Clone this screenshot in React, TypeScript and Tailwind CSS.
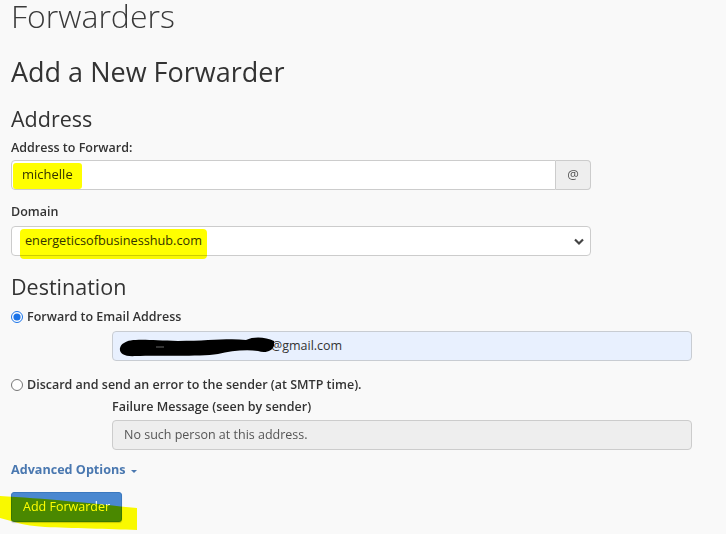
import React from 'react';

const font = { fontFamily: '"Open Sans", "Liberation Sans", sans-serif' };

function Highlight({ className }: { className: string }) {
  return <span className={`pointer-events-none absolute bg-[#ffff00] mix-blend-multiply ${className}`} />;
}

function Radio({ checked }: { checked?: boolean }) {
  return (
    <input
      type="radio"
      name="fwdopt"
      defaultChecked={checked}
      className="m-0 h-[12px] w-[12px] shrink-0 accent-[#1a73e8]"
    />
  );
}

export default function App() {
  return (
    <div style={font} className="relative min-h-[534px] w-[726px] overflow-hidden bg-[#f9f9f9] px-[11px] text-[#333]">
      <h1 className="text-[32px] font-light leading-[32px] text-[#3a3a3a]">Forwarders</h1>
      <h2 className="mt-[25px] text-[27px] font-normal leading-[30px]">Add a New Forwarder</h2>

      <h3 className="mt-[20px] text-[21.5px] font-normal leading-[24px]">Address</h3>
      <label className="mt-[8px] block text-[12.5px] font-semibold leading-[18px]">Address to Forward:</label>
      <div className="relative mt-[3px] flex h-[30px] w-[580px]">
        <div className="flex flex-1 items-center rounded-l-[4px] border border-[#ccc] bg-white px-[10px] text-[13px] text-[#333]">
          michelle
        </div>
        <div className="flex w-[35px] items-center justify-center rounded-r-[4px] border border-l-0 border-[#ccc] bg-[#eee] text-[13px] text-[#555]">
          @
        </div>
        <Highlight className="left-[2px] top-[3px] h-[26px] w-[69px] rounded-[3px]" />
      </div>

      <label className="mt-[13px] block text-[12.5px] font-semibold leading-[18px]">Domain</label>
      <div className="relative mt-[5px] flex h-[30px] w-[580px] items-center rounded-[4px] border border-[#ccc] bg-white pl-[13px] text-[12.7px]">
        energeticsofbusinesshub.com
        <svg className="absolute right-[5px] top-[10px]" width="12" height="9" viewBox="0 0 12 9">
          <path d="M2 2.5 L6 6.5 L10 2.5" fill="none" stroke="#444" strokeWidth="2.2" />
        </svg>
        <Highlight className="left-[8px] top-[2px] h-[30px] w-[187px] rounded-[4px]" />
      </div>

      <h3 className="mt-[19px] text-[21.5px] font-normal leading-[24px]">Destination</h3>
      <label className="mt-[9px] flex items-center gap-[4px] text-[12.5px] font-semibold leading-[18px]">
        <Radio checked />
        Forward to Email Address
      </label>
      <div className="relative ml-[101px] mt-[5px] flex h-[30px] w-[580px] items-center rounded-[4px] border border-[#c8ccd2] bg-[#e8f0fe] pl-[158px] text-[12.5px]">
        @gmail.com
        <svg className="absolute left-[5px] top-[3px]" width="156" height="24" viewBox="0 0 156 24">
          <path
            d="M6 8 C12 3 30 5 60 6 C90 6 110 3 128 5 C136 1 148 2 156 6 C158 14 150 19 140 16 C128 14 112 16 100 19 C80 22 40 20 18 21 C6 22 1 18 2 13 C3 10 4 9 6 8 Z"
            fill="#000"
          />
          <path d="M38 12 L46 12" stroke="#666" strokeWidth="1" />
        </svg>
      </div>

      <label className="mt-[15px] flex items-center gap-[4px] text-[12.5px] font-semibold leading-[18px]">
        <Radio />
        Discard and send an error to the sender (at SMTP time).
      </label>
      <div className="ml-[101px]">
        <label className="mt-[4px] block text-[12.5px] font-semibold leading-[18px]">Failure Message (seen by sender)</label>
        <div className="mt-[4px] flex h-[30px] w-[580px] items-center rounded-[4px] border border-[#ccc] bg-[#eee] px-[11px] text-[12.5px] text-[#555]">
          No such person at this address.
        </div>
      </div>

      <div className="mt-[10px] flex items-center gap-[5px] text-[12.6px] font-bold leading-[20px] text-[#4a78b0]">
        Advanced Options
        <span className="mt-[2px] h-0 w-0 border-x-[3px] border-t-[3px] border-x-transparent border-t-[#4a78b0]" />
      </div>

      <div className="relative mt-[12px] h-[41px]">
        <button className="h-[30px] rounded-[3px] border border-[#3a78bf] bg-[#4a88d0] px-[11px] text-[12.5px] text-white shadow-[0_1px_1px_rgba(0,0,0,0.2)]">
          Add Forwarder
        </button>
        <svg className="pointer-events-none absolute -left-[11px] top-[4px] mix-blend-multiply" width="140" height="36" viewBox="0 0 140 36">
          <path d="M0 0 C40 2 100 8 126 11 L137 12 L137 34 C110 33 70 32 45 31 C30 30 20 28 11 25 L0 22 Z" fill="#ffff00" />
        </svg>
      </div>
    </div>
  );
}
